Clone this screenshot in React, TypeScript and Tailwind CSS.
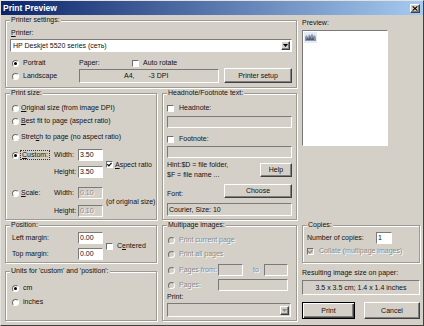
import React from "react";

const sunken =
  "border border-t-[#7a7a7a] border-l-[#7a7a7a] border-r-white border-b-white";
const raised =
  "border border-t-white border-l-white border-r-[#404040] border-b-[#404040] shadow-[inset_-1px_-1px_0_#808080]";
const dis = "text-[#8a8a8a] [text-shadow:1px_1px_0_#fff]";

function Radio({ checked = false, disabled = false }: { checked?: boolean; disabled?: boolean }) {
  return (
    <span
      className={`flex items-center justify-center w-[7px] h-[7px] shrink-0 rounded-full border border-t-[#6e6e6e] border-l-[#6e6e6e] border-r-white border-b-white ${
        disabled ? "bg-[#d4d0c8]" : "bg-white"
      }`}
    >
      {checked && <span className="w-[3px] h-[3px] rounded-full bg-black" />}
    </span>
  );
}

function Check({ checked = false, disabled = false }: { checked?: boolean; disabled?: boolean }) {
  return (
    <span
      className={`flex items-center justify-center w-[7px] h-[7px] shrink-0 border border-t-[#6e6e6e] border-l-[#6e6e6e] border-r-white border-b-white ${
        disabled ? "bg-[#d4d0c8]" : "bg-white"
      }`}
    >
      {checked && (
        <svg width="5" height="5" viewBox="0 0 5 5">
          <path
            d="M0.4 2.2 L1.9 3.8 L4.6 0.8"
            stroke={disabled ? "#8a8a8a" : "#000"}
            strokeWidth="1.2"
            fill="none"
          />
        </svg>
      )}
    </span>
  );
}

function Field({
  className = "",
  disabled = false,
  children,
}: {
  className?: string;
  disabled?: boolean;
  children?: React.ReactNode;
}) {
  return (
    <div className={`flex items-center whitespace-nowrap ${sunken} ${disabled ? "bg-[#d4d0c8]" : "bg-white"} ${className}`}>
      {children}
    </div>
  );
}

function Btn({ className = "", children, def = false }: { className?: string; children: React.ReactNode; def?: boolean }) {
  return (
    <div
      className={`flex items-center justify-center bg-[#d4d0c8] ${
        def
          ? "border border-[#000] shadow-[inset_1px_1px_0_#fff,inset_-1px_-1px_0_#404040,inset_-2px_-2px_0_#808080]"
          : raised
      } ${className}`}
    >
      {children}
    </div>
  );
}

function DropBtn({ disabled = false }: { disabled?: boolean }) {
  return (
    <div className={`w-[9px] h-[9px] bg-[#d4d0c8] ${raised} flex items-center justify-center shrink-0`}>
      <svg width="5" height="3" viewBox="0 0 5 3">
        <path d="M0 0 L5 0 L2.5 3 Z" fill={disabled ? "#8a8a8a" : "#000"} />
      </svg>
    </div>
  );
}

function Group({
  label,
  className = "",
  children,
}: {
  label: string;
  className?: string;
  children?: React.ReactNode;
}) {
  return (
    <div className={`relative border border-[#9d9a93] shadow-[inset_1px_1px_0_#fff,1px_1px_0_#fff] ${className}`}>
      <span className="absolute left-[4px] top-[-5px] px-[1px] h-[8px] leading-[8px] bg-[#d4d0c8] whitespace-nowrap">
        {label}
      </span>
      {children}
    </div>
  );
}

export default function App() {
  return (
    <div className="w-[424px] h-[326px] overflow-hidden bg-[#d4d0c8] border border-t-[#e4e2de] border-l-[#e4e2de] border-r-[#404040] border-b-[#404040] font-['Liberation_Sans',Arial,sans-serif] text-[7px] leading-[8px] text-[#111]">
      {/* Title bar */}
      <div className="h-[14px] bg-[linear-gradient(to_right,#0a246a,#a6caf0)] flex items-center justify-between pl-[2px] pr-[3px]">
        <span className="text-white font-bold text-[8.5px] leading-[10px]">Print Preview</span>
        <div className={`w-[10px] h-[9px] bg-[#d4d0c8] ${raised} flex items-center justify-center`}>
          <svg width="6" height="5" viewBox="0 0 6 5">
            <path d="M0.6 0.4 L5.4 4.6 M5.4 0.4 L0.6 4.6" stroke="#000" strokeWidth="1.1" />
          </svg>
        </div>
      </div>

      {/* Body */}
      <div className="flex pl-[4px] gap-[5px]">
        {/* Left column */}
        <div className="w-[292px] flex flex-col">
          <Group label="Printer settings:" className="mt-[5px] pt-[8px] px-[4px] pb-[4px]">
            <div className="ml-[1px] h-[8px]">
              <u>P</u>rinter:
            </div>
            <Field className="mt-[2px] h-[13px] justify-between pl-[2px] pr-[1px]">
              <span>HP Deskjet 5520 series (сеть)</span>
              <DropBtn />
            </Field>
            <div className="flex mt-[7px] h-[24px]">
              <div className="w-[69px] pl-[2px] flex flex-col gap-[5px]">
                <div className="flex items-center gap-[4px] h-[8px]">
                  <Radio checked />
                  <span>Portrait</span>
                </div>
                <div className="flex items-center gap-[4px] h-[8px]">
                  <Radio />
                  <span>Landscape</span>
                </div>
              </div>
              <div className="w-[140px] flex flex-col">
                <div className="flex items-center h-[8px]">
                  <span className="w-[53px]">Paper:</span>
                  <Check />
                  <span className="ml-[4px]">Auto rotate</span>
                </div>
                <Field disabled className="mt-[2px] h-[14px]">
                  <span className="ml-[44px]">A4,</span>
                  <span className="ml-[14px]">-3 DPI</span>
                </Field>
              </div>
              <Btn className="ml-[5px] w-[68px] h-[15px] self-end">Printer setup</Btn>
            </div>
          </Group>

          <div className="flex gap-[5px] mt-[5px]">
            {/* Left lower */}
            <div className="w-[152px] flex flex-col">
              <Group label="Print size:" className="pt-[10px] pl-[6px] pr-0 pb-[2px] whitespace-nowrap">
                <div className="flex items-center gap-[2px] h-[8px]">
                  <Radio />
                  <span>
                    <u>O</u>riginal size (from image DPI)
                  </span>
                </div>
                <div className="flex items-center gap-[2px] h-[8px] mt-[5px]">
                  <Radio />
                  <span>
                    <u>B</u>est fit to page (aspect ratio)
                  </span>
                </div>
                <div className="flex items-center gap-[2px] h-[8px] mt-[8px]">
                  <Radio />
                  <span>
                    Stret<u>c</u>h to page (no aspect ratio)
                  </span>
                </div>
                <div className="flex mt-[8px]">
                  <div className="w-[42px] h-[12px] flex items-center gap-[1px]">
                    <Radio checked />
                    <span className="border border-dotted border-[#333] px-[1px] leading-[8px]">
                      <u>C</u>ustom:
                    </span>
                  </div>
                  <div className="flex flex-col gap-[5px]">
                    <div className="flex items-center h-[12px]">
                      <span className="w-[24px]">Width:</span>
                      <Field className="w-[25px] h-[12px] pl-[1px]">3.50</Field>
                    </div>
                    <div className="flex items-center h-[12px]">
                      <span className="w-[24px]">Height:</span>
                      <Field className="w-[25px] h-[12px] pl-[1px]">3.50</Field>
                    </div>
                  </div>
                  <div className="flex items-center gap-[2px] ml-[3px] mt-[2px]">
                    <Check checked />
                    <span>
                      <u>A</u>spect ratio
                    </span>
                  </div>
                </div>
                <div className="flex mt-[9px]">
                  <div className="w-[42px] h-[12px] flex items-center gap-[2px]">
                    <Radio />
                    <span>
                      <u>S</u>cale:
                    </span>
                  </div>
                  <div className="flex flex-col gap-[6px]">
                    <div className="flex items-center h-[12px]">
                      <span className="w-[24px]">Width:</span>
                      <Field disabled className={`w-[25px] h-[12px] pl-[1px] ${dis}`}>
                        0.10
                      </Field>
                    </div>
                    <div className="flex items-center h-[12px]">
                      <span className="w-[24px]">Height:</span>
                      <Field disabled className={`w-[25px] h-[12px] pl-[1px] ${dis}`}>
                        0.10
                      </Field>
                    </div>
                  </div>
                  <div className="flex items-center ml-[3px]">
                    <span className="whitespace-nowrap">(of original size)</span>
                  </div>
                </div>
              </Group>

              <Group label="Position:" className="mt-[5px] pt-[6px] pl-[6px] pr-[2px] pb-[2px]">
                <div className="flex">
                  <div className="flex flex-col gap-[4px]">
                    <div className="flex items-center h-[12px]">
                      <span className="w-[66px]">Left margin:</span>
                      <Field className="w-[25px] h-[12px] pl-[1px]">0.00</Field>
                    </div>
                    <div className="flex items-center h-[12px]">
                      <span className="w-[66px]">Top margin:</span>
                      <Field className="w-[25px] h-[12px] pl-[1px]">0.00</Field>
                    </div>
                  </div>
                  <div className="flex items-center gap-[4px] ml-[3px]">
                    <Check />
                    <span>
                      C<u>e</u>ntered
                    </span>
                  </div>
                </div>
              </Group>

              <Group
                label="Units for 'custom' and 'position':"
                className="mt-[8px] pt-[12px] pl-[6px] pr-[2px] pb-[14px]"
              >
                <div className="flex items-center gap-[4px] h-[8px]">
                  <Radio checked />
                  <span>cm</span>
                </div>
                <div className="flex items-center gap-[4px] h-[8px] mt-[6px]">
                  <Radio />
                  <span>inches</span>
                </div>
              </Group>
            </div>

            {/* Right lower */}
            <div className="w-[135px] flex flex-col">
              <Group label="Headnote/Footnote text:" className="pt-[10px] px-[4px] pb-[3px]">
                <div className="flex items-center gap-[5px] h-[8px]">
                  <Check />
                  <span>Headnote:</span>
                </div>
                <Field disabled className="mt-[4px] h-[12px]" />
                <div className="flex items-center gap-[5px] h-[8px] mt-[7px]">
                  <Check />
                  <span>Footnote:</span>
                </div>
                <Field disabled className="mt-[3px] h-[12px]" />
                <div className="flex justify-between mt-[2px] h-[20px]">
                  <div className="leading-[10px]">
                    <div>Hint:$D = file folder,</div>
                    <div>$F = file name ...</div>
                  </div>
                  <Btn className="w-[32px] h-[14px] mt-[3px]">Help</Btn>
                </div>
                <div className="flex justify-between items-end mt-[4px] h-[14px]">
                  <span>Font:</span>
                  <Btn className="w-[68px] h-[14px]">Choose</Btn>
                </div>
                <Field disabled className="mt-[5px] h-[13px] pl-[1px]">
                  Courier, Size: 10
                </Field>
              </Group>

              <Group label="Multipage images:" className="mt-[5px] pt-[10px] px-[4px] pb-[3px]">
                <div className={`flex items-center gap-[4px] h-[8px] ml-[1px] ${dis}`}>
                  <Radio disabled />
                  <span>Print current page</span>
                </div>
                <div className={`flex items-center gap-[4px] h-[8px] ml-[1px] mt-[6px] ${dis}`}>
                  <Radio disabled />
                  <span>Print all pages</span>
                </div>
                <div className="flex items-center h-[12px] ml-[1px] mt-[6px]">
                  <div className={`flex items-center gap-[4px] w-[50px] ${dis}`}>
                    <Radio disabled />
                    <span>Pages from:</span>
                  </div>
                  <Field disabled className="w-[25px] h-[12px]" />
                  <span className={`w-[21px] pl-[10px] ${dis}`}>to</span>
                  <Field disabled className="w-[24px] h-[12px]" />
                </div>
                <div className="flex items-center h-[12px] ml-[1px] mt-[3px]">
                  <div className={`flex items-center gap-[4px] w-[50px] ${dis}`}>
                    <Radio disabled />
                    <span>Pages:</span>
                  </div>
                  <Field disabled className="w-[70px] h-[12px]" />
                </div>
                <div className="h-[8px] mt-[2px]">Print:</div>
                <Field disabled className="mt-[2px] h-[14px] w-[124px] justify-end pr-[1px]">
                  <DropBtn disabled />
                </Field>
              </Group>
            </div>
          </div>
        </div>

        {/* Right column */}
        <div className="w-[118px] flex flex-col">
          <div className="mt-[4px] h-[8px]">Preview:</div>
          <div className={`mt-[3px] w-[86px] h-[116px] bg-white ${sunken} pl-[1px] pt-[1px]`}>
            <svg width="13" height="11" viewBox="0 0 13 11">
              <rect x="0" y="0" width="13" height="11" fill="#e6ebf3" />
              <path d="M1 9 L1 5 L2.5 3 L4 5 L5 2 L6.5 4 L8 1.5 L9.5 4 L11 3 L12 6 L12 9 Z" fill="#8d97ab" />
              <path d="M2 8 L3 5.5 L4.5 7 L6 4.5 L7.5 7 L9 5 L10.5 8 Z" fill="#3f4d6b" opacity="0.8" />
            </svg>
          </div>

          <Group label="Copies:" className="mt-[79px] pt-[6px] pl-[4px] pr-[2px] pb-[7px]">
            <div className="flex items-center h-[12px]">
              <span className="w-[69px]">Number of copies:</span>
              <Field className="w-[16px] h-[12px] pl-[1px]">1</Field>
            </div>
            <div className="flex items-center gap-[5px] h-[8px] mt-[3px]">
              <Check checked disabled />
              <span className={dis}>Collate (multipage images)</span>
            </div>
          </Group>

          <div className="mt-[6px] h-[8px]">Resulting image size on paper:</div>
          <Field disabled className="mt-[3px] h-[15px] justify-center">
            3.5 x 3.5 cm; 1.4 x 1.4 inches
          </Field>
          <div className="flex justify-between mt-[7px]">
            <Btn def className="w-[53px] h-[17px]">
              Print
            </Btn>
            <Btn className="w-[56px] h-[17px]">Cancel</Btn>
          </div>
        </div>
      </div>
    </div>
  );
}
